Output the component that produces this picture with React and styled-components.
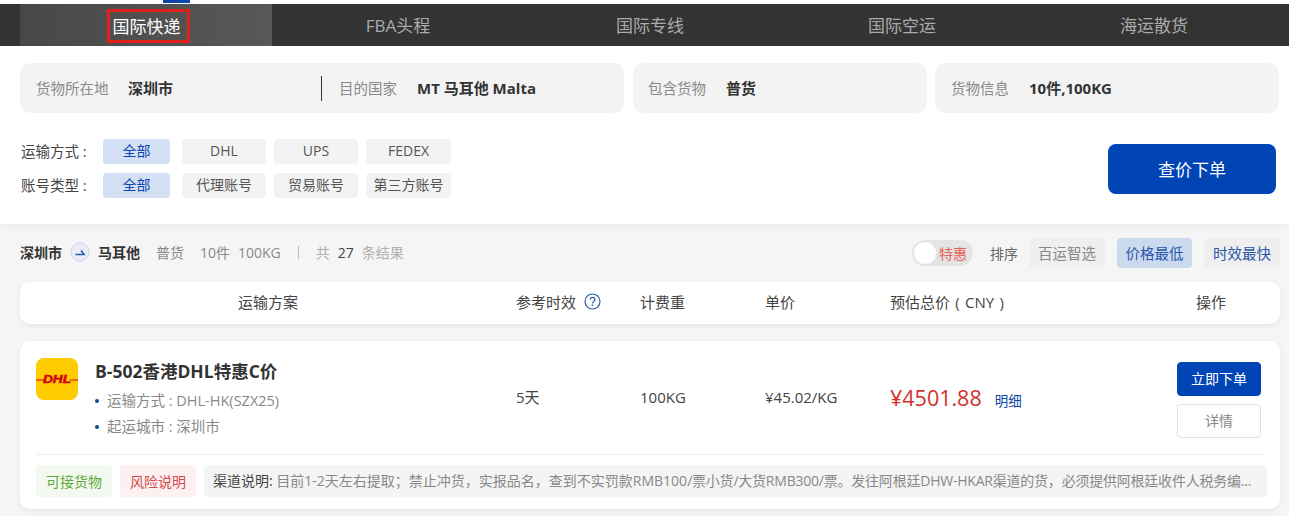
import React from "react";
import styled, { createGlobalStyle } from "styled-components";

const Global = createGlobalStyle`
  html, body { margin: 0; padding: 0; background: #f5f5f5; }
  body { font-family: "Open Sans", "Noto Sans CJK SC", sans-serif; color: #333; overflow: hidden; }
  * { box-sizing: border-box; }
`;
const Page = styled.div`width: 1289px; height: 516px; overflow: hidden;`;
const TopPanel = styled.section`background: #fff; height: 224px; box-shadow: 0 2px 8px rgba(0,0,0,.05); position: relative;`;
const AccentStrip = styled.div`height: 4px; padding-left: 163px; &::before { content: ""; display: block; width: 27px; height: 3px; background: #0b46b0; }`;
const Nav = styled.nav`height: 42px; background: #333; padding-left: 20px; display: flex;`;
const Tab = styled.div`
  width: 252px; display: flex; align-items: center; justify-content: center; font-size: 17px; padding-bottom: 2px;
  color: ${p => (p.$active ? "#fff" : "#aaa")};
  background: ${p => (p.$active ? "linear-gradient(90deg,#484848,#585858)" : "transparent")};
`;
const Marked = styled.span`border: 3px solid #e0201a; height: 34px; width: 83px; margin: 4px 0 0 4px; padding: 0 0 2px 3px; display: flex; align-items: center; white-space: nowrap;`;
const SearchRow = styled.div`display: flex; padding: 17px 0 0 20px;`;
const Field = styled.div`height: 50px; width: ${p => p.$w}px; margin-right: ${p => p.$mr || 0}px; flex: none; background: #f3f3f3; border-radius: 10px; display: flex; align-items: center; padding: 0 0 2px ${p => p.$pl || 15}px; font-size: 15px;`;
const FieldPart = styled.div`display: flex; align-items: center; width: ${p => (p.$w ? p.$w + "px" : "auto")};`;
const FieldLabel = styled.span`color: #8a8a8a; font-size: 14.5px; width: ${p => p.$w || 92}px; flex: none;`;
const FieldValue = styled.b`color: #333; font-weight: 700;`;
const Rule = styled.span`width: 1px; height: 25px; background: #333; margin: 2px 17px 0 0; flex: none;`;
const FilterArea = styled.div`display: flex; justify-content: space-between; padding: 26px 13px 0 21px;`;
const FilterRows = styled.div`display: flex; flex-direction: column; gap: 9px;`;
const FilterRow = styled.div`display: flex; align-items: center; height: 25px;`;
const FilterLabel = styled.span`width: 82px; font-size: 14.5px; color: #444; white-space: nowrap; padding-bottom: 3px;`;
const Chips = styled.div`display: flex; gap: 8px;`;
const Chip = styled.span`
  width: ${p => (p.$active ? "67px" : p.$wide ? "85px" : "84px")}; height: 25px; margin-right: ${p => (p.$active ? "4px" : "0")};
  border-radius: 4px; display: flex; align-items: center; justify-content: center; font-size: 14px; white-space: nowrap; padding-bottom: 3px;
  background: ${p => (p.$active ? "#d3e0f3" : "#f3f3f3")}; color: ${p => (p.$active ? "#0b46b0" : "#555")};
`;
const QueryButton = styled.button`width: 168px; height: 50px; margin-top: 5px; border: 0; border-radius: 8px; background: #0044b5; color: #fff; font: inherit; font-size: 17px; padding: 0 0 2px;`;
const SummaryRow = styled.div`height: 58px; padding: 0 9px 0 20px; display: flex; align-items: center; justify-content: space-between; font-size: 14px;`;
const Group = styled.div`display: flex; align-items: center;`;
const LeftGroup = styled(Group)`padding-bottom: 2px;`;
const Strong = styled.b`color: #333; font-weight: 700;`;
const Muted = styled.span`color: #8a8a8a; margin-left: ${p => p.$ml || 0}px;`;
const Faint = styled.span`color: #b0b0b0; margin-left: ${p => p.$ml || 0}px;`;
const Count = styled.span`color: #444; margin-left: 8px;`;
const RouteIcon = styled.svg`width: 20px; height: 20px; margin: 0 8px 0 8px;`;
const Sep = styled.span`width: 1px; height: 13px; background: #bbb; margin: 0 17px 0 17px;`;
const Toggle = styled.div`width: 61px; height: 26px; border-radius: 13px; background: #e4e4e4; position: relative; font-size: 14px; color: #e8605a; display: flex; align-items: center; padding: 0 0 1px 27px; margin-right: 17px;`;
const Knob = styled.span`position: absolute; left: 2px; top: 2px; width: 22px; height: 22px; border-radius: 50%; background: #fff;`;
const SortLabel = styled.span`color: #666; font-size: 14px; margin-right: 11px;`;
const SortBtn = styled.span`
  height: 30px; width: ${p => p.$w}px; margin-left: ${p => p.$ml || 0}px; border-radius: 4px; display: flex; align-items: center; justify-content: center; font-size: 14.5px; padding-bottom: 1px;
  background: ${p => (p.$active ? "#ccdaf0" : "#efefef")}; color: ${p => p.$color};
`;
const Card = styled.div`margin: 0 9px 0 20px; background: #fff; border-radius: 10px; box-shadow: 0 2px 6px rgba(0,0,0,.06);`;
const HeaderRow = styled(Card)`height: 42px; display: grid; grid-template-columns: 496px 124px 125px 125px 1fr; align-items: center; font-size: 15px; color: #444; padding-bottom: 3px;`;
const HeadCell = styled.div`display: flex; align-items: center; justify-content: ${p => (p.$center ? "center" : "flex-start")};`;
const HelpIcon = styled.svg`width: 17px; height: 17px; margin-left: 8px;`;
const HeadOp = styled.div`display: flex; justify-content: space-between; padding-right: 54px; white-space: pre;`;
const HeadTotal = styled.span`word-spacing: 1.4px;`;
const ResultCard = styled(Card)`height: 168px; margin-top: 17px; padding: 0 16px;`;
const Main = styled.div`height: 114px; display: grid; grid-template-columns: 480px 124px 125px 125px 1fr; align-items: center; border-bottom: 1px solid #ececec; font-size: 15px; color: #444;`;
const Plan = styled.div`display: flex; align-self: start; padding-top: 17px;`;
const Logo = styled.div`width: 42px; height: 42px; border-radius: 8px; background: #fc0; flex: none; margin-right: 17px; display: flex; align-items: center; justify-content: center;`;
const PlanText = styled.div`display: flex; flex-direction: column;`;
const Title = styled.div`font-size: 17.5px; font-weight: 700; color: #333; line-height: 26px; margin-bottom: 4px; white-space: nowrap;`;
const Bullet = styled.div`font-size: 14.5px; color: #888; line-height: 26px; padding-left: 12px; position: relative; white-space: pre;
  &::before { content: ""; position: absolute; left: 0; top: 11px; width: 4px; height: 4px; border-radius: 50%; background: #0b46a0; }`;
const Plain = styled.div`padding-bottom: 2px;`;
const PriceCell = styled.div`display: flex; align-items: center; justify-content: space-between; padding-right: 3px;`;
const PriceBox = styled.div`display: flex; align-items: baseline; gap: 13px; white-space: nowrap;`;
const Price = styled.span`font-size: 21.5px; color: #d0312d; white-space: nowrap;`;
const Detail = styled.span`font-size: 13.5px; color: #0b46a0; white-space: nowrap;`;
const Actions = styled.div`display: flex; flex-direction: column; gap: 8px; width: 84px; margin-top: 4px;`;
const ActBtn = styled.button`
  height: 34px; width: 84px; border-radius: 4px; font: inherit; font-size: 14px; padding: 0 0 2px;
  border: 1px solid ${p => (p.$primary ? "#0044b5" : "#e2e2e2")};
  background: ${p => (p.$primary ? "#0044b5" : "#fff")}; color: ${p => (p.$primary ? "#fff" : "#888")};
`;
const TagRow = styled.div`display: flex; gap: 8px; padding-top: 10px; margin-right: -3px;`;
const Tag = styled.span`width: 76px; height: 32px; border-radius: 4px; font-size: 14px; display: flex; align-items: center; justify-content: center; flex: none;
  background: ${p => p.$bg}; color: ${p => p.$color};`;
const Note = styled.div`flex: 1; min-width: 0; height: 32px; line-height: 32px; padding: 0 0 0 9px; background: #f4f4f4; border-radius: 4px; font-size: 14px; color: #888; white-space: nowrap;`;
const NoteLabel = styled.span`color: #444;`;
const NoteTail = styled.span`letter-spacing: -0.22px;`;

export default function App() {
  return (
    <Page>
      <Global />
      <TopPanel>
        <AccentStrip />
        <Nav>
          <Tab $active><Marked>国际快递</Marked></Tab>
          <Tab>FBA头程</Tab>
          <Tab>国际专线</Tab>
          <Tab>国际空运</Tab>
          <Tab>海运散货</Tab>
        </Nav>
        <SearchRow>
          <Field $w={604} $mr={9} $pl={16}>
            <FieldPart $w={285}><FieldLabel>货物所在地</FieldLabel><FieldValue>深圳市</FieldValue></FieldPart>
            <Rule />
            <FieldPart><FieldLabel $w={78}>目的国家</FieldLabel><FieldValue>MT 马耳他 Malta</FieldValue></FieldPart>
          </Field>
          <Field $w={294} $mr={8}><FieldLabel $w={78}>包含货物</FieldLabel><FieldValue>普货</FieldValue></Field>
          <Field $w={344} $pl={16}><FieldLabel $w={78}>货物信息</FieldLabel><FieldValue>10件,100KG</FieldValue></Field>
        </SearchRow>
        <FilterArea>
          <FilterRows>
            <FilterRow>
              <FilterLabel>运输方式 :</FilterLabel>
              <Chips><Chip $active>全部</Chip><Chip>DHL</Chip><Chip>UPS</Chip><Chip $wide>FEDEX</Chip></Chips>
            </FilterRow>
            <FilterRow>
              <FilterLabel>账号类型 :</FilterLabel>
              <Chips><Chip $active>全部</Chip><Chip>代理账号</Chip><Chip>贸易账号</Chip><Chip $wide>第三方账号</Chip></Chips>
            </FilterRow>
          </FilterRows>
          <QueryButton>查价下单</QueryButton>
        </FilterArea>
      </TopPanel>
      <SummaryRow>
        <LeftGroup>
          <Strong>深圳市</Strong>
          <RouteIcon viewBox="0 0 20 20">
            <circle cx="10" cy="10" r="9" fill="#e8edf7" stroke="#cbd6ea" />
            <path d="M5.5 12.5h8.5L11 8.5" fill="none" stroke="#2b5cae" strokeWidth="1.6" />
          </RouteIcon>
          <Strong>马耳他</Strong>
          <Muted $ml={16}>普货</Muted>
          <Muted $ml={16}>10件</Muted>
          <Muted $ml={8}>100KG</Muted>
          <Sep />
          <Faint>共</Faint>
          <Count>27</Count>
          <Faint $ml={8}>条结果</Faint>
        </LeftGroup>
        <Group>
          <Toggle><Knob />特惠</Toggle>
          <SortLabel>排序</SortLabel>
          <SortBtn $w={76} $color="#888">百运智选</SortBtn>
          <SortBtn $w={75} $ml={12} $active $color="#2a56a8">价格最低</SortBtn>
          <SortBtn $w={76} $ml={12} $color="#2a56a8">时效最快</SortBtn>
        </Group>
      </SummaryRow>
      <HeaderRow>
        <HeadCell $center>运输方案</HeadCell>
        <HeadCell>参考时效
          <HelpIcon viewBox="0 0 17 17">
            <circle cx="8.5" cy="8.5" r="7.5" fill="none" stroke="#2a5cab" strokeWidth="1.2" />
            <path d="M6.2 6.6c0-3 4.7-2.8 4.7 0 0 1.9-2.4 1.8-2.4 3.8" fill="none" stroke="#2a5cab" strokeWidth="1.2" />
            <circle cx="8.5" cy="12.4" r=".8" fill="#2a5cab" />
          </HelpIcon>
        </HeadCell>
        <HeadCell>计费重</HeadCell>
        <HeadCell>单价</HeadCell>
        <HeadOp><HeadTotal>预估总价 ( CNY )</HeadTotal><span>操作</span></HeadOp>
      </HeaderRow>
      <ResultCard>
        <Main>
          <Plan>
            <Logo>
              <svg width="42" height="14" viewBox="0 0 42 14">
                <path d="M0 8h8M34 8h8" stroke="#d40511" strokeWidth="1.2" />
                <text x="7" y="11" textLength="28" lengthAdjust="spacingAndGlyphs" fontSize="10" fontWeight="700" fontStyle="italic" fill="#d40511" stroke="#d40511" strokeWidth=".5" fontFamily="Liberation Sans">DHL</text>
              </svg>
            </Logo>
            <PlanText>
              <Title>B-502香港DHL特惠C价</Title>
              <Bullet>运输方式 : DHL-HK(SZX25)</Bullet>
              <Bullet>起运城市 : 深圳市</Bullet>
            </PlanText>
          </Plan>
          <Plain>5天</Plain>
          <Plain>100KG</Plain>
          <Plain>¥45.02/KG</Plain>
          <PriceCell>
            <PriceBox><Price>¥4501.88</Price><Detail>明细</Detail></PriceBox>
            <Actions><ActBtn $primary>立即下单</ActBtn><ActBtn>详情</ActBtn></Actions>
          </PriceCell>
        </Main>
        <TagRow>
          <Tag $bg="#f3f9f0" $color="#5fa83c">可接货物</Tag>
          <Tag $bg="#fdf0f0" $color="#d0494a">风险说明</Tag>
          <Note><NoteLabel>渠道说明:</NoteLabel> 目前1-2天左右提取；禁止冲货，实报品名，查到不实罚款RMB100<NoteTail>/票小货/大货RMB300/票。发往阿根廷DHW-HKAR渠道的货，必须提供阿根廷收件人税务编...</NoteTail></Note>
        </TagRow>
      </ResultCard>
    </Page>
  );
}
